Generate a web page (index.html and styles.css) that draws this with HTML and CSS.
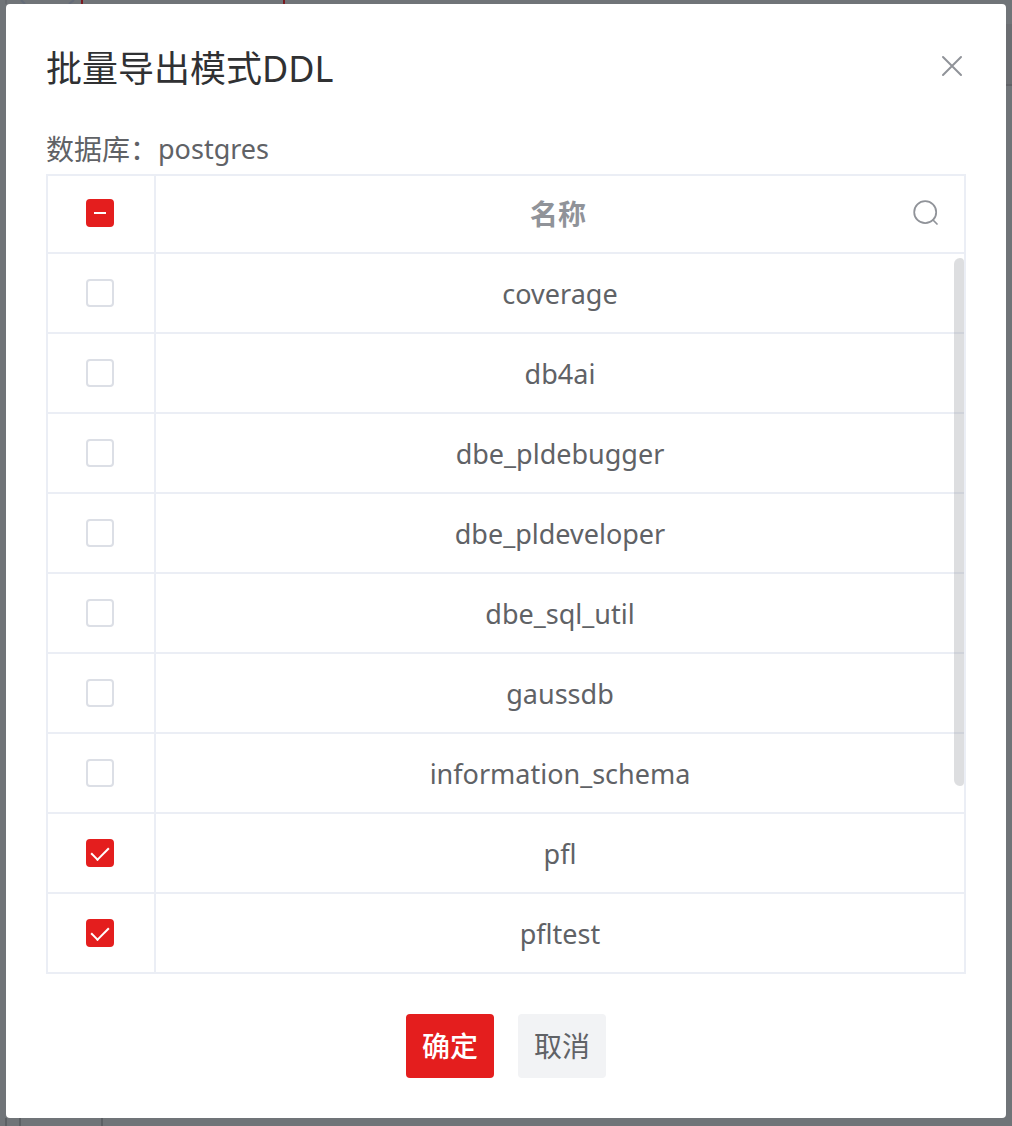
FILE: index.html
```html
<!DOCTYPE html>
<html lang="zh-CN">
<head>
<meta charset="utf-8">
<meta name="viewport" content="width=device-width, initial-scale=1">
<title>批量导出模式DDL</title>
<link rel="stylesheet" href="styles.css">
</head>
<body>
<div class="backdrop" aria-hidden="true">
  <svg class="backdrop-top" width="300" height="4" viewBox="0 0 300 4">
    <path d="M6 0V4" stroke="#686b70" stroke-width="2"/>
    <path d="M21 0L25 4M74 0L69 4" stroke="#646b78" stroke-width="2"/>
    <path d="M82 0V4M284 0V4" stroke="#7b1a20" stroke-width="2"/>
  </svg>
  <div class="backdrop-side"></div>
  <svg class="backdrop-bottom" width="110" height="8" viewBox="0 0 110 8">
    <path d="M6 0V8M20 0V8M102 0V8" stroke="#5c6064" stroke-width="2"/>
  </svg>
</div>
<main class="overlay">
  <form class="dialog" role="dialog" aria-labelledby="dialog-title">
    <header class="dialog-header">
      <h1 class="dialog-title" id="dialog-title">批量导出模式DDL</h1>
      <button class="icon-button" type="button" aria-label="关闭">
        <svg width="24" height="24" viewBox="0 0 24 24" fill="none" stroke="currentColor" stroke-width="2" stroke-linecap="round"><path d="M3 3L21 21M21 3L3 21"/></svg>
      </button>
    </header>
    <p class="database"><span>数据库：</span><span class="name">postgres</span></p>
    <div class="table-wrap">
      <table class="schema-table">
        <thead>
          <tr>
            <th class="select-cell"><input class="checkbox is-mixed" type="checkbox" aria-label="全选" aria-checked="mixed"></th>
            <th>
              <div class="name-heading">
                <span>名称</span>
                <button class="icon-button" type="button" aria-label="搜索">
                  <svg width="28" height="28" viewBox="0 0 28 28" fill="none" stroke="currentColor" stroke-width="1.75" stroke-linecap="round"><circle cx="13.2" cy="13.2" r="11"/><path d="M21 21L25 25"/></svg>
                </button>
              </div>
            </th>
          </tr>
        </thead>
        <tbody>
          <tr><td class="select-cell"><input class="checkbox" type="checkbox" id="s1"></td><td><label class="name" for="s1">coverage</label></td></tr>
          <tr><td class="select-cell"><input class="checkbox" type="checkbox" id="s2"></td><td><label class="name" for="s2">db4ai</label></td></tr>
          <tr><td class="select-cell"><input class="checkbox" type="checkbox" id="s3"></td><td><label class="name" for="s3">dbe_pldebugger</label></td></tr>
          <tr><td class="select-cell"><input class="checkbox" type="checkbox" id="s4"></td><td><label class="name" for="s4">dbe_pldeveloper</label></td></tr>
          <tr><td class="select-cell"><input class="checkbox" type="checkbox" id="s5"></td><td><label class="name" for="s5">dbe_sql_util</label></td></tr>
          <tr><td class="select-cell"><input class="checkbox" type="checkbox" id="s6"></td><td><label class="name" for="s6">gaussdb</label></td></tr>
          <tr><td class="select-cell"><input class="checkbox" type="checkbox" id="s7"></td><td><label class="name" for="s7">information_schema</label></td></tr>
          <tr><td class="select-cell"><input class="checkbox" type="checkbox" id="s8" checked></td><td><label class="name" for="s8">pfl</label></td></tr>
          <tr><td class="select-cell"><input class="checkbox" type="checkbox" id="s9" checked></td><td><label class="name" for="s9">pfltest</label></td></tr>
        </tbody>
      </table>
      <div class="scroll-thumb"></div>
    </div>
    <footer class="dialog-footer">
      <button class="button button-primary" type="submit">确定</button>
      <button class="button" type="button">取消</button>
    </footer>
  </form>
</main>
</body>
</html>
```
FILE: styles.css
```css
* {
  box-sizing: border-box;
}

body {
  margin: 0;
  min-height: 100vh;
  background: #707478;
  color: #606266;
  font-family: "Noto Sans", "Noto Sans CJK SC", sans-serif;
  font-size: 28px;
  line-height: 40px;
}

button,
input {
  margin: 0;
  font: inherit;
}

svg {
  display: block;
}

/* Dimmed page behind the dialog */
.backdrop {
  position: absolute;
  inset: 0;
  overflow: hidden;
}

.backdrop-top {
  position: absolute;
  top: 0;
  left: 0;
}

.backdrop-bottom {
  position: absolute;
  bottom: 0;
  left: 0;
}

.backdrop-side {
  position: absolute;
  top: 24px;
  right: 0;
  width: 6px;
  height: 62px;
  background: #6b6d71;
  border-bottom: 2px solid #606266;
}

.overlay {
  position: relative;
  padding: 4px 6px 8px;
}

.dialog {
  padding: 40px;
  background: #fff;
  border-radius: 4px;
}

.dialog-header {
  display: flex;
  justify-content: space-between;
  align-items: center;
  margin-bottom: 30px;
}

.dialog-title {
  margin: 0;
  color: #303133;
  font-size: 36px;
  font-weight: 400;
  line-height: 50px;
}

.icon-button {
  padding: 0 0 2px;
  border: 0;
  background: none;
  color: #909399;
  cursor: pointer;
}

.dialog-header .icon-button {
  padding: 0 2px 6px;
}

.database {
  display: flex;
  margin: 0;
  line-height: 50px;
}

.name {
  font-size: 27px;
}

.table-wrap {
  position: relative;
}

.schema-table {
  width: 100%;
  border: 2px solid #ebeef5;
  border-collapse: separate;
  border-spacing: 0;
  table-layout: fixed;
}

.schema-table th,
.schema-table td {
  height: 80px;
  padding: 0;
  border-bottom: 2px solid #ebeef5;
  text-align: center;
  vertical-align: middle;
}

.schema-table th {
  height: 78px;
  color: #909399;
  font-weight: 700;
}

.schema-table tbody tr:last-child td {
  height: 78px;
  border-bottom: 0;
}

.schema-table .select-cell {
  width: 108px;
  padding-right: 2px;
  border-right: 2px solid #ebeef5;
}

.schema-table th.select-cell {
  padding-bottom: 2px;
}

.name-heading {
  display: grid;
  grid-template-columns: 28px 1fr 28px;
  align-items: center;
  padding: 0 24px 0 20px;
}

.name-heading span {
  grid-column: 2;
}

.checkbox {
  display: grid;
  place-items: center;
  width: 28px;
  height: 28px;
  margin: 0 auto;
  appearance: none;
  background: #fff;
  border: 2px solid #dcdfe6;
  border-radius: 4px;
}

.checkbox:checked,
.checkbox.is-mixed {
  background: #e41e1e;
  border-color: #e41e1e;
}

.checkbox:checked::after {
  content: "";
  width: 8px;
  height: 15px;
  margin-bottom: 4px;
  border: solid #fff;
  border-width: 0 2px 2px 0;
  transform: rotate(45deg);
}

.checkbox.is-mixed::after {
  content: "";
  width: 12px;
  height: 2px;
  background: #fff;
}

.scroll-thumb {
  position: absolute;
  top: 84px;
  right: 2px;
  width: 10px;
  height: 528px;
  border-radius: 6px 4px 4px 6px;
  background: rgba(144, 147, 153, 0.3);
}

.dialog-footer {
  display: flex;
  justify-content: center;
  gap: 24px;
  margin-top: 40px;
}

.button {
  height: 64px;
  padding: 0 16px;
  border: 0;
  border-radius: 4px;
  background: #f2f3f5;
  color: #606266;
  cursor: pointer;
}

.button-primary {
  background: #e41e1e;
  color: #fff;
  font-weight: 500;
}
```
